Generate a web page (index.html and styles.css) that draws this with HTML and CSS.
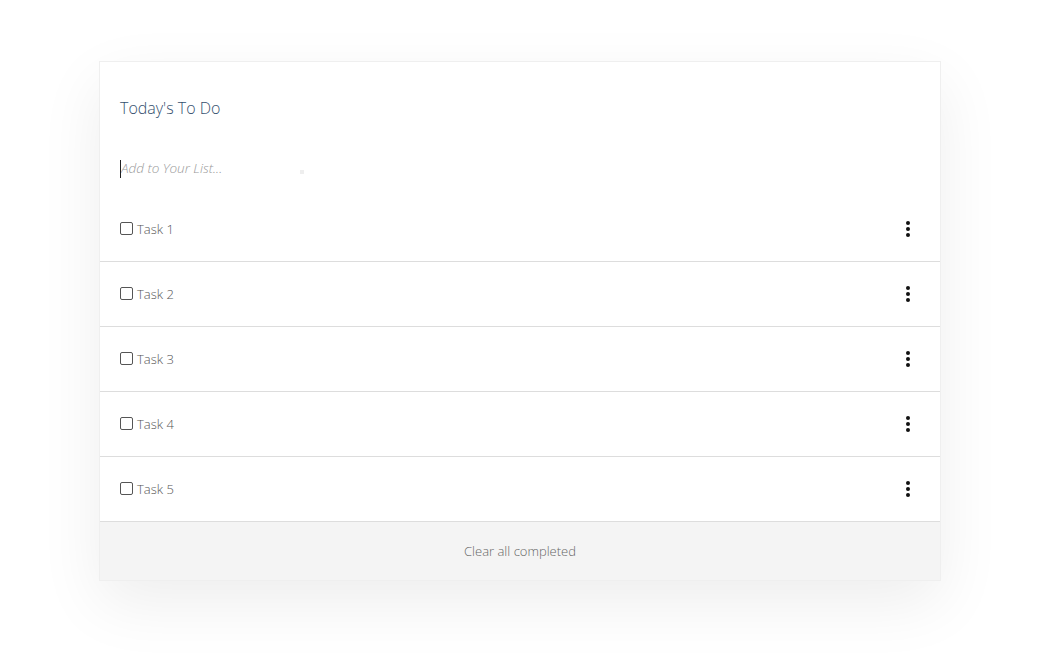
FILE: index.html
```html
<!DOCTYPE html>
<html>
<head>
<meta charset="utf-8">
<link rel="stylesheet" href="styles.css">
</head>
<body>
<div class="page">
  <div class="card">
    <div class="header">
      <h1 class="title">Today's To Do</h1>
      <div class="add">
        <span class="caret"></span><input class="add-input" type="text" placeholder="Add to Your List...">
        <span class="dot-mark"></span>
      </div>
    </div>
    <ul class="list">
      <li class="item"><label class="task"><input type="checkbox" class="check"><span>Task 1</span></label><span class="kebab"><i></i><i></i><i></i></span></li>
      <li class="item"><label class="task"><input type="checkbox" class="check"><span>Task 2</span></label><span class="kebab"><i></i><i></i><i></i></span></li>
      <li class="item"><label class="task"><input type="checkbox" class="check"><span>Task 3</span></label><span class="kebab"><i></i><i></i><i></i></span></li>
      <li class="item"><label class="task"><input type="checkbox" class="check"><span>Task 4</span></label><span class="kebab"><i></i><i></i><i></i></span></li>
      <li class="item"><label class="task"><input type="checkbox" class="check"><span>Task 5</span></label><span class="kebab"><i></i><i></i><i></i></span></li>
    </ul>
    <div class="footer">Clear all completed</div>
  </div>
</div>
</body>
</html>
```
FILE: styles.css
```css
html, body {
  margin: 0;
  padding: 0;
  background: #fff;
  font-family: "Open Sans", "Liberation Sans", sans-serif;
}
.page {
  padding: 61px 0 0 99px;
  min-height: 664px;
  box-sizing: border-box;
}
.card {
  width: 842px;
  box-sizing: border-box;
  border: 1px solid #efefef;
  background: #fff;
  box-shadow: 0 22px 60px rgba(0, 0, 0, 0.07);
}
.header {
  padding: 34px 20px 0;
}
.title {
  margin: 0;
  font-size: 16px;
  line-height: 24px;
  font-weight: 300;
  color: #34506e;
}
.add {
  position: relative;
  height: 57px;
  margin-top: 20px;
  display: flex;
  align-items: center;
}
.caret {
  width: 1px;
  height: 18px;
  background: #222;
}
.add-input {
  border: none;
  outline: none;
  padding: 0;
  margin: 0 0 1px;
  font-family: inherit;
  font-size: 13.5px;
  font-style: italic;
  font-weight: 300;
  width: 300px;
  background: transparent;
}
.add-input::placeholder {
  color: #999;
}
.dot-mark {
  position: absolute;
  left: 180px;
  top: 30px;
  width: 4px;
  height: 4px;
  background: #eee;
}
.list {
  list-style: none;
  margin: 0;
  padding: 0;
}
.item {
  height: 64px;
  border-bottom: 1px solid #ddd;
  display: flex;
  align-items: center;
  justify-content: space-between;
  padding: 0 30px 0 20px;
}
.task {
  display: flex;
  align-items: center;
  font-size: 13px;
  font-weight: 300;
  color: #555;
}
.check {
  appearance: none;
  -webkit-appearance: none;
  width: 13px;
  height: 13px;
  margin: 0 4px 0 0;
  border: 1px solid #555;
  border-radius: 2px;
  box-sizing: border-box;
  background: #fff;
  position: relative;
  top: -1px;
}
.kebab {
  display: flex;
  flex-direction: column;
  gap: 2px;
}
.kebab i {
  display: block;
  width: 4px;
  height: 4px;
  border-radius: 50%;
  background: #111;
}
.footer {
  height: 58px;
  background: #f4f4f4;
  display: flex;
  align-items: center;
  justify-content: center;
  font-size: 13px;
  font-weight: 300;
  color: #666;
}
```
